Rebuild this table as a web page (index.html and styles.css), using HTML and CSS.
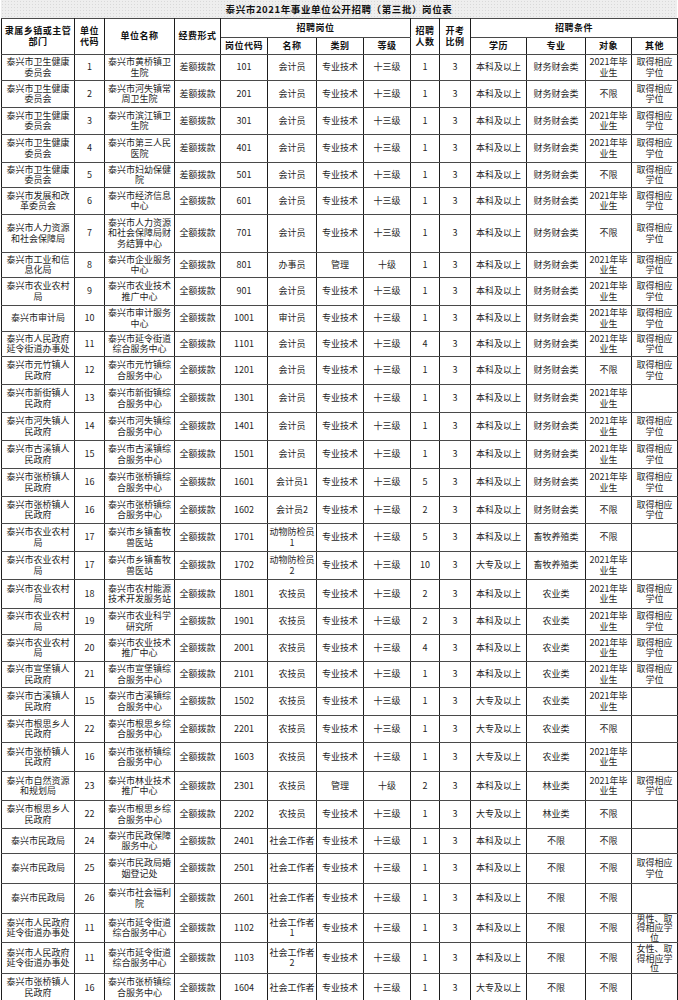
FILE: index.html
```html
<!DOCTYPE html>
<html lang="zh-CN">
<head>
<meta charset="utf-8">
<title>泰兴市2021年事业单位公开招聘（第三批）岗位表</title>
<link rel="stylesheet" href="styles.css">
</head>
<body>
<div class="sheet">
  <div class="title">泰兴市2021年事业单位公开招聘（第三批）岗位表</div>
  <table class="grid">
    <colgroup>
      <col class="c-dept"><col class="c-ucode"><col class="c-uname"><col class="c-fund">
      <col class="c-pcode"><col class="c-pname"><col class="c-type"><col class="c-level">
      <col class="c-num"><col class="c-ratio"><col class="c-edu"><col class="c-major">
      <col class="c-target"><col class="c-other">
    </colgroup>
    <thead>
      <tr class="hr1">
        <th rowspan="2">隶属乡镇或主管部门</th>
        <th rowspan="2">单位代码</th>
        <th rowspan="2">单位名称</th>
        <th rowspan="2">经费形式</th>
        <th colspan="4">招聘岗位</th>
        <th rowspan="2">招聘人数</th>
        <th rowspan="2">开考比例</th>
        <th colspan="4">招聘条件</th>
      </tr>
      <tr class="hr2">
        <th>岗位代码</th><th>名称</th><th>类别</th><th>等级</th>
        <th>学历</th><th>专业</th><th>对象</th><th>其他</th>
      </tr>
    </thead>
    <tbody>
      <tr class="h26"><td>泰兴市卫生健康委员会</td><td>1</td><td>泰兴市黄桥镇卫生院</td><td>差额拨款</td><td>101</td><td>会计员</td><td>专业技术</td><td>十三级</td><td>1</td><td>3</td><td>本科及以上</td><td>财务财会类</td><td>2021年毕业生</td><td>取得相应学位</td></tr>
      <tr class="h27"><td>泰兴市卫生健康委员会</td><td>2</td><td>泰兴市河失镇常周卫生院</td><td>差额拨款</td><td>201</td><td>会计员</td><td>专业技术</td><td>十三级</td><td>1</td><td>3</td><td>本科及以上</td><td>财务财会类</td><td>不限</td><td>取得相应学位</td></tr>
      <tr class="h27"><td>泰兴市卫生健康委员会</td><td>3</td><td>泰兴市滨江镇卫生院</td><td>差额拨款</td><td>301</td><td>会计员</td><td>专业技术</td><td>十三级</td><td>1</td><td>3</td><td>本科及以上</td><td>财务财会类</td><td>2021年毕业生</td><td>取得相应学位</td></tr>
      <tr class="h28"><td>泰兴市卫生健康委员会</td><td>4</td><td>泰兴市第三人民医院</td><td>差额拨款</td><td>401</td><td>会计员</td><td>专业技术</td><td>十三级</td><td>1</td><td>3</td><td>本科及以上</td><td>财务财会类</td><td>2021年毕业生</td><td>取得相应学位</td></tr>
      <tr class="h25"><td>泰兴市卫生健康委员会</td><td>5</td><td>泰兴市妇幼保健院</td><td>差额拨款</td><td>501</td><td>会计员</td><td>专业技术</td><td>十三级</td><td>1</td><td>3</td><td>本科及以上</td><td>财务财会类</td><td>不限</td><td>取得相应学位</td></tr>
      <tr class="h27"><td>泰兴市发展和改革委员会</td><td>6</td><td>泰兴市经济信息中心</td><td>全额拨款</td><td>601</td><td>会计员</td><td>专业技术</td><td>十三级</td><td>1</td><td>3</td><td>本科及以上</td><td>财务财会类</td><td>2021年毕业生</td><td>取得相应学位</td></tr>
      <tr class="h38"><td>泰兴市人力资源和社会保障局</td><td>7</td><td>泰兴市人力资源和社会保障局财务结算中心</td><td>全额拨款</td><td>701</td><td>会计员</td><td>专业技术</td><td>十三级</td><td>1</td><td>3</td><td>本科及以上</td><td>财务财会类</td><td>不限</td><td>取得相应学位</td></tr>
      <tr class="h25"><td>泰兴市工业和信息化局</td><td>8</td><td>泰兴市企业服务中心</td><td>全额拨款</td><td>801</td><td>办事员</td><td>管理</td><td>十级</td><td>1</td><td>3</td><td>本科及以上</td><td>财务财会类</td><td>2021年毕业生</td><td>取得相应学位</td></tr>
      <tr class="h28"><td>泰兴市农业农村局</td><td>9</td><td>泰兴市农业技术推广中心</td><td>全额拨款</td><td>901</td><td>会计员</td><td>专业技术</td><td>十三级</td><td>1</td><td>3</td><td>本科及以上</td><td>财务财会类</td><td>2021年毕业生</td><td>取得相应学位</td></tr>
      <tr class="h26"><td>泰兴市审计局</td><td>10</td><td>泰兴市审计服务中心</td><td>全额拨款</td><td>1001</td><td>审计员</td><td>专业技术</td><td>十三级</td><td>1</td><td>3</td><td>本科及以上</td><td>财务财会类</td><td>2021年毕业生</td><td>取得相应学位</td></tr>
      <tr class="h25"><td>泰兴市人民政府延令街道办事处</td><td>11</td><td>泰兴市延令街道综合服务中心</td><td>全额拨款</td><td>1101</td><td>会计员</td><td>专业技术</td><td>十三级</td><td>4</td><td>3</td><td>本科及以上</td><td>财务财会类</td><td>2021年毕业生</td><td>取得相应学位</td></tr>
      <tr class="h28"><td>泰兴市元竹镇人民政府</td><td>12</td><td>泰兴市元竹镇综合服务中心</td><td>全额拨款</td><td>1201</td><td>会计员</td><td>专业技术</td><td>十三级</td><td>1</td><td>3</td><td>本科及以上</td><td>财务财会类</td><td>不限</td><td>取得相应学位</td></tr>
      <tr class="h28"><td>泰兴市新街镇人民政府</td><td>13</td><td>泰兴市新街镇综合服务中心</td><td>全额拨款</td><td>1301</td><td>会计员</td><td>专业技术</td><td>十三级</td><td>1</td><td>3</td><td>本科及以上</td><td>财务财会类</td><td>2021年毕业生</td><td></td></tr>
      <tr class="h28"><td>泰兴市河失镇人民政府</td><td>14</td><td>泰兴市河失镇综合服务中心</td><td>全额拨款</td><td>1401</td><td>会计员</td><td>专业技术</td><td>十三级</td><td>1</td><td>3</td><td>本科及以上</td><td>财务财会类</td><td>2021年毕业生</td><td>取得相应学位</td></tr>
      <tr class="h28"><td>泰兴市古溪镇人民政府</td><td>15</td><td>泰兴市古溪镇综合服务中心</td><td>全额拨款</td><td>1501</td><td>会计员</td><td>专业技术</td><td>十三级</td><td>1</td><td>3</td><td>本科及以上</td><td>财务财会类</td><td>2021年毕业生</td><td>取得相应学位</td></tr>
      <tr class="h28"><td>泰兴市张桥镇人民政府</td><td>16</td><td>泰兴市张桥镇综合服务中心</td><td>全额拨款</td><td>1601</td><td>会计员1</td><td>专业技术</td><td>十三级</td><td>5</td><td>3</td><td>本科及以上</td><td>财务财会类</td><td>2021年毕业生</td><td>取得相应学位</td></tr>
      <tr class="h27"><td>泰兴市张桥镇人民政府</td><td>16</td><td>泰兴市张桥镇综合服务中心</td><td>全额拨款</td><td>1602</td><td>会计员2</td><td>专业技术</td><td>十三级</td><td>2</td><td>3</td><td>本科及以上</td><td>财务财会类</td><td>不限</td><td>取得相应学位</td></tr>
      <tr class="h28"><td>泰兴市农业农村局</td><td>17</td><td>泰兴市乡镇畜牧兽医站</td><td>全额拨款</td><td>1701</td><td>动物防检员1</td><td>专业技术</td><td>十三级</td><td>5</td><td>3</td><td>本科及以上</td><td>畜牧养殖类</td><td>不限</td><td></td></tr>
      <tr class="h28"><td>泰兴市农业农村局</td><td>17</td><td>泰兴市乡镇畜牧兽医站</td><td>全额拨款</td><td>1702</td><td>动物防检员2</td><td>专业技术</td><td>十三级</td><td>10</td><td>3</td><td>大专及以上</td><td>畜牧养殖类</td><td>2021年毕业生</td><td></td></tr>
      <tr class="h29"><td>泰兴市农业农村局</td><td>18</td><td>泰兴市农村能源技术开发服务站</td><td>全额拨款</td><td>1801</td><td>农技员</td><td>专业技术</td><td>十三级</td><td>2</td><td>3</td><td>本科及以上</td><td>农业类</td><td>2021年毕业生</td><td>取得相应学位</td></tr>
      <tr class="h26"><td>泰兴市农业农村局</td><td>19</td><td>泰兴市农业科学研究所</td><td>全额拨款</td><td>1901</td><td>农技员</td><td>专业技术</td><td>十三级</td><td>2</td><td>3</td><td>本科及以上</td><td>农业类</td><td>2021年毕业生</td><td>取得相应学位</td></tr>
      <tr class="h27"><td>泰兴市农业农村局</td><td>20</td><td>泰兴市农业技术推广中心</td><td>全额拨款</td><td>2001</td><td>农技员</td><td>专业技术</td><td>十三级</td><td>4</td><td>3</td><td>本科及以上</td><td>农业类</td><td>2021年毕业生</td><td>取得相应学位</td></tr>
      <tr class="h26"><td>泰兴市宣堡镇人民政府</td><td>21</td><td>泰兴市宣堡镇综合服务中心</td><td>全额拨款</td><td>2101</td><td>农技员</td><td>专业技术</td><td>十三级</td><td>1</td><td>3</td><td>本科及以上</td><td>农业类</td><td>2021年毕业生</td><td>取得相应学位</td></tr>
      <tr class="h28"><td>泰兴市古溪镇人民政府</td><td>15</td><td>泰兴市古溪镇综合服务中心</td><td>全额拨款</td><td>1502</td><td>农技员</td><td>专业技术</td><td>十三级</td><td>1</td><td>3</td><td>大专及以上</td><td>农业类</td><td>2021年毕业生</td><td></td></tr>
      <tr class="h27"><td>泰兴市根思乡人民政府</td><td>22</td><td>泰兴市根思乡综合服务中心</td><td>全额拨款</td><td>2201</td><td>农技员</td><td>专业技术</td><td>十三级</td><td>1</td><td>3</td><td>大专及以上</td><td>农业类</td><td>不限</td><td></td></tr>
      <tr class="h29"><td>泰兴市张桥镇人民政府</td><td>16</td><td>泰兴市张桥镇综合服务中心</td><td>全额拨款</td><td>1603</td><td>农技员</td><td>专业技术</td><td>十三级</td><td>1</td><td>3</td><td>大专及以上</td><td>农业类</td><td>2021年毕业生</td><td></td></tr>
      <tr class="h29"><td>泰兴市自然资源和规划局</td><td>23</td><td>泰兴市林业技术推广中心</td><td>全额拨款</td><td>2301</td><td>农技员</td><td>管理</td><td>十级</td><td>2</td><td>3</td><td>本科及以上</td><td>林业类</td><td>2021年毕业生</td><td>取得相应学位</td></tr>
      <tr class="h28"><td>泰兴市根思乡人民政府</td><td>22</td><td>泰兴市根思乡综合服务中心</td><td>全额拨款</td><td>2202</td><td>农技员</td><td>专业技术</td><td>十三级</td><td>1</td><td>3</td><td>大专及以上</td><td>林业类</td><td>不限</td><td></td></tr>
      <tr class="h25"><td>泰兴市民政局</td><td>24</td><td>泰兴市民政保障服务中心</td><td>全额拨款</td><td>2401</td><td>社会工作者</td><td>专业技术</td><td>十三级</td><td>1</td><td>3</td><td>本科及以上</td><td>不限</td><td>不限</td><td></td></tr>
      <tr class="h30"><td>泰兴市民政局</td><td>25</td><td>泰兴市民政局婚姻登记处</td><td>全额拨款</td><td>2501</td><td>社会工作者</td><td>专业技术</td><td>十三级</td><td>1</td><td>3</td><td>本科及以上</td><td>不限</td><td>不限</td><td>取得相应学位</td></tr>
      <tr class="h30"><td>泰兴市民政局</td><td>26</td><td>泰兴市社会福利院</td><td>全额拨款</td><td>2601</td><td>社会工作者</td><td>专业技术</td><td>十三级</td><td>1</td><td>3</td><td>本科及以上</td><td>不限</td><td>不限</td><td></td></tr>
      <tr class="h29"><td>泰兴市人民政府延令街道办事处</td><td>11</td><td>泰兴市延令街道综合服务中心</td><td>全额拨款</td><td>1102</td><td>社会工作者1</td><td>专业技术</td><td>十三级</td><td>1</td><td>3</td><td>本科及以上</td><td>不限</td><td>不限</td><td class="tight">男性、取得相应学位</td></tr>
      <tr class="h31"><td>泰兴市人民政府延令街道办事处</td><td>11</td><td>泰兴市延令街道综合服务中心</td><td>全额拨款</td><td>1103</td><td>社会工作者2</td><td>专业技术</td><td>十三级</td><td>1</td><td>3</td><td>本科及以上</td><td>不限</td><td>不限</td><td class="tight">女性、取得相应学位</td></tr>
      <tr class="h28"><td>泰兴市张桥镇人民政府</td><td>16</td><td>泰兴市张桥镇综合服务中心</td><td>全额拨款</td><td>1604</td><td>社会工作者</td><td>专业技术</td><td>十三级</td><td>1</td><td>3</td><td>大专及以上</td><td>不限</td><td>不限</td><td></td></tr>
    </tbody>
  </table>
</div>
</body>
</html>
```

FILE: styles.css
```css
html, body {
  margin: 0;
  padding: 0;
  background: #ffffff;
}

body {
  font-family: "Noto Sans CJK SC", "Noto Sans", sans-serif;
  color: #1f1f1f;
}

.sheet {
  width: 676px;
  padding-left: 1px;
}

.title {
  height: 18px;
  line-height: 19px;
  text-align: center;
  font-size: 9.5px;
  font-weight: bold;
  letter-spacing: 0.6px;
  color: #111111;
  background-color: #eeeeee;
  background-image: radial-gradient(#d9d9d9 0.7px, transparent 0.9px);
  background-size: 3px 3px;
}

.grid {
  width: 676px;
  table-layout: fixed;
  border-collapse: collapse;
  font-size: 9px;
  line-height: 10.4px;
}

.grid th,
.grid td {
  border-style: solid;
  border-width: 1px;
  border-color: #4a4a4a #1e1e1e;
  padding: 0 1px;
  text-align: center;
  vertical-align: middle;
  overflow: hidden;
}

.grid th {
  font-weight: bold;
  color: #111111;
  letter-spacing: 0.5px;
}

.grid td.tight {
  line-height: 9.4px;
}

.c-dept { width: 73px; }
.c-ucode { width: 30px; }
.c-uname { width: 70px; }
.c-fund { width: 46px; }
.c-pcode { width: 47px; }
.c-pname { width: 49px; }
.c-type { width: 47px; }
.c-level { width: 47px; }
.c-num { width: 29px; }
.c-ratio { width: 31px; }
.c-edu { width: 56px; }
.c-major { width: 59px; }
.c-target { width: 46px; }
.c-other { width: 46px; }

.hr1 { height: 19px; }
.hr2 { height: 17px; }

.h25 { height: 25px; }
.h26 { height: 26px; }
.h27 { height: 27px; }
.h28 { height: 28px; }
.h29 { height: 29px; }
.h30 { height: 30px; }
.h31 { height: 31px; }
.h38 { height: 38px; }
```
